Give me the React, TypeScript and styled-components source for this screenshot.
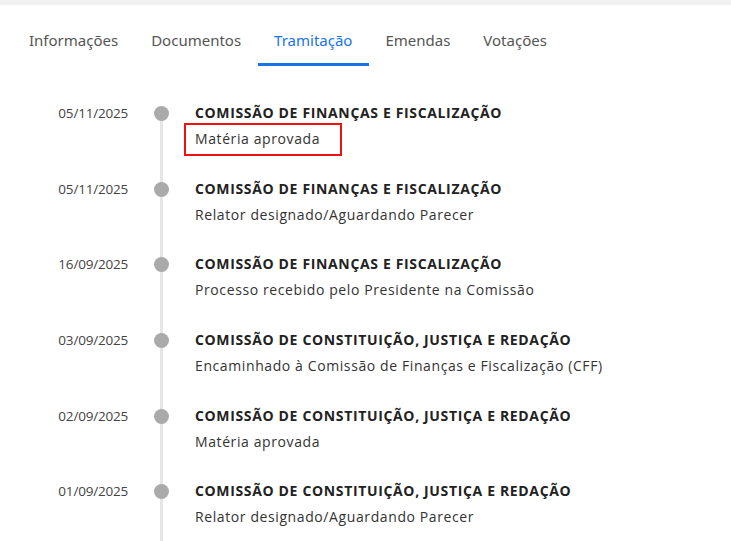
import styled, { createGlobalStyle } from "styled-components"

const GlobalStyle = createGlobalStyle`
    body {
        margin: 0;
        background: #fff;
        font-family: "Open Sans", "Noto Sans", sans-serif;
    }
`

const TopBar = styled.div`
    height: 5px;
    background-color: #f1f1f1;
`

const Tabs = styled.nav`
    display: flex;
    padding: 19px 0 0 12.5px;
`

const Tab = styled.div<{ $active?: boolean }>`
    padding: 5px 16.5px 12px 16.5px;
    font-family: "Noto Sans", sans-serif;
    font-size: 15px;
    line-height: 22px;
    color: ${(p) => (p.$active ? "#1a73e8" : "#555")};
    border-bottom: 3px solid ${(p) => (p.$active ? "#1a73e8" : "transparent")};
`

const Timeline = styled.div`
    padding-top: 37px;
`

const Item = styled.div`
    display: grid;
    grid-template-columns: 128px 67px 1fr;
    height: 75.7px;
`

const DateCell = styled.div`
    text-align: right;
    font-size: 13.5px;
    letter-spacing: -0.2px;
    line-height: 20px;
    color: #444;
`

const Rail = styled.div<{ $first?: boolean }>`
    position: relative;
    &::before {
        content: "";
        position: absolute;
        left: 32px;
        top: ${(p) => (p.$first ? "10px" : "0")};
        bottom: 0;
        width: 3px;
        background: #e6e6e6;
    }
`

const Dot = styled.div`
    position: absolute;
    left: 26px;
    top: 3px;
    width: 15px;
    height: 15px;
    border-radius: 50%;
    background: #aaa;
`

const Content = styled.div`
    display: flex;
    flex-direction: column;
    gap: 6px;
    align-items: flex-start;
`

const Title = styled.div`
    font-size: 14px;
    font-weight: 700;
    letter-spacing: 0.65px;
    line-height: 20px;
    color: #222;
`

const Desc = styled.div<{ $marked?: boolean }>`
    font-size: 14px;
    letter-spacing: 0.6px;
    line-height: 20px;
    color: #333;
    ${(p) =>
        p.$marked &&
        `
        margin: -6px 0 0 -11px;
        padding: 4px 20px 5px 9px;
        border: 2px solid #ee1111;
    `}
`

const tabs = ["Informações", "Documentos", "Tramitação", "Emendas", "Votações"]

const entries = [
    { date: "05/11/2025", title: "COMISSÃO DE FINANÇAS E FISCALIZAÇÃO", desc: "Matéria aprovada", marked: true },
    { date: "05/11/2025", title: "COMISSÃO DE FINANÇAS E FISCALIZAÇÃO", desc: "Relator designado/Aguardando Parecer" },
    { date: "16/09/2025", title: "COMISSÃO DE FINANÇAS E FISCALIZAÇÃO", desc: "Processo recebido pelo Presidente na Comissão" },
    { date: "03/09/2025", title: "COMISSÃO DE CONSTITUIÇÃO, JUSTIÇA E REDAÇÃO", desc: "Encaminhado à Comissão de Finanças e Fiscalização (CFF)" },
    { date: "02/09/2025", title: "COMISSÃO DE CONSTITUIÇÃO, JUSTIÇA E REDAÇÃO", desc: "Matéria aprovada" },
    { date: "01/09/2025", title: "COMISSÃO DE CONSTITUIÇÃO, JUSTIÇA E REDAÇÃO", desc: "Relator designado/Aguardando Parecer" },
]

const App = () => {
    return (
        <>
            <GlobalStyle />
            <TopBar />
            <Tabs>
                {tabs.map((t) => (
                    <Tab key={t} $active={t === "Tramitação"}>
                        {t}
                    </Tab>
                ))}
            </Tabs>
            <Timeline>
                {entries.map((e, i) => (
                    <Item key={i}>
                        <DateCell>{e.date}</DateCell>
                        <Rail $first={i === 0}>
                            <Dot />
                        </Rail>
                        <Content>
                            <Title>{e.title}</Title>
                            <Desc $marked={e.marked}>{e.desc}</Desc>
                        </Content>
                    </Item>
                ))}
            </Timeline>
        </>
    )
}

export default App
